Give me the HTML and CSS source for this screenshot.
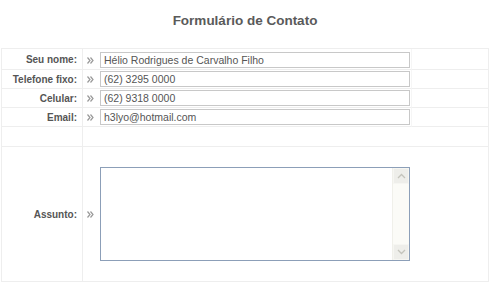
FILE: index.html
```html
<!DOCTYPE html>
<html lang="pt-BR">
<head>
    <meta charset="UTF-8">
    <meta name="viewport" content="width=device-width, initial-scale=1.0">
    <title>Formulário de Contato</title>
    <link rel="stylesheet" href="styles.css">
</head>
<body>
    <div class="container">
        <h1>Formulário de Contato</h1>
        <form id="contact-form">
            <table class="form-table">
                <colgroup>
                    <col class="col-label">
                    <col class="col-field">
                    <col class="col-spacer">
                </colgroup>
                <tr class="row-first">
                    <td class="label">Seu nome:</td>
                    <td class="field">
                        <div class="field-inner">
                            <svg class="arrow" width="7" height="7" viewBox="0 0 7 7"><path d="M0.5 0.5 L3 3.5 L0.5 6.5 M3.5 0.5 L6 3.5 L3.5 6.5" fill="none" stroke="#999" stroke-width="1.2"/></svg>
                            <input type="text" name="nome" value="Hélio Rodrigues de Carvalho Filho">
                        </div>
                    </td>
                    <td class="spacer"></td>
                </tr>
                <tr>
                    <td class="label">Telefone fixo:</td>
                    <td class="field">
                        <div class="field-inner">
                            <svg class="arrow" width="7" height="7" viewBox="0 0 7 7"><path d="M0.5 0.5 L3 3.5 L0.5 6.5 M3.5 0.5 L6 3.5 L3.5 6.5" fill="none" stroke="#999" stroke-width="1.2"/></svg>
                            <input type="text" name="telefone" value="(62) 3295 0000">
                        </div>
                    </td>
                    <td class="spacer"></td>
                </tr>
                <tr>
                    <td class="label">Celular:</td>
                    <td class="field">
                        <div class="field-inner">
                            <svg class="arrow" width="7" height="7" viewBox="0 0 7 7"><path d="M0.5 0.5 L3 3.5 L0.5 6.5 M3.5 0.5 L6 3.5 L3.5 6.5" fill="none" stroke="#999" stroke-width="1.2"/></svg>
                            <input type="text" name="celular" value="(62) 9318 0000">
                        </div>
                    </td>
                    <td class="spacer"></td>
                </tr>
                <tr>
                    <td class="label">Email:</td>
                    <td class="field">
                        <div class="field-inner">
                            <svg class="arrow" width="7" height="7" viewBox="0 0 7 7"><path d="M0.5 0.5 L3 3.5 L0.5 6.5 M3.5 0.5 L6 3.5 L3.5 6.5" fill="none" stroke="#999" stroke-width="1.2"/></svg>
                            <input type="text" name="email" value="h3lyo@hotmail.com">
                        </div>
                    </td>
                    <td class="spacer"></td>
                </tr>
                <tr class="row-empty">
                    <td class="label"></td>
                    <td class="field" colspan="2"><div class="field-inner"></div></td>
                </tr>
                <tr class="row-message">
                    <td class="label">Assunto:</td>
                    <td class="field" colspan="2">
                        <div class="field-inner">
                            <svg class="arrow" width="7" height="7" viewBox="0 0 7 7"><path d="M0.5 0.5 L3 3.5 L0.5 6.5 M3.5 0.5 L6 3.5 L3.5 6.5" fill="none" stroke="#999" stroke-width="1.2"/></svg>
                            <div class="textbox">
                                <textarea name="assunto"></textarea>
                                <div class="scrollbar">
                                    <div class="scroll-btn">
                                        <svg width="9" height="6" viewBox="0 0 9 6"><path d="M1 5 L4.5 1.5 L8 5" fill="none" stroke="#c4c4bc" stroke-width="1.3"/></svg>
                                    </div>
                                    <div class="scroll-track"></div>
                                    <div class="scroll-btn">
                                        <svg width="9" height="6" viewBox="0 0 9 6"><path d="M1 1 L4.5 4.5 L8 1" fill="none" stroke="#c4c4bc" stroke-width="1.3"/></svg>
                                    </div>
                                </div>
                            </div>
                        </div>
                    </td>
                </tr>
            </table>
        </form>
    </div>
</body>
</html>
```

FILE: styles.css
```css
body {
    margin: 0;
    font-family: "Liberation Sans", Arial, sans-serif;
    background: #fff;
}
.container {
    width: 488px;
    margin-left: 1px;
}
h1 {
    margin: 0;
    padding-top: 13px;
    height: 48px;
    box-sizing: border-box;
    font-size: 13.5px;
    line-height: 16px;
    text-align: center;
    color: #5a5a5a;
}
form {
    margin: 0;
}
.form-table {
    width: 488px;
    table-layout: fixed;
    border-collapse: separate;
    border-spacing: 0;
    border: 1px solid #eeeeee;
}
.col-label {
    width: 81px;
}
.col-field {
    width: 328px;
}
.col-spacer {
    width: 77px;
}
.form-table td {
    border-bottom: 1px solid #eeeeee;
    padding: 0;
}
.form-table tr:last-child td {
    border-bottom: none;
}
.form-table .label {
    padding-right: 5px;
    border-right: 1px solid #eeeeee;
    text-align: right;
    font-size: 10px;
    font-weight: bold;
    color: #555;
    white-space: nowrap;
}
.form-table .field {
    padding-left: 4px;
    white-space: nowrap;
}
.form-table .spacer {
    border-left: 1px solid #f6f6f6;
}
.field-inner {
    display: flex;
    align-items: center;
    gap: 6px;
    height: 18px;
}
.row-first .field-inner {
    padding-top: 2px;
}
.row-empty .field-inner {
    height: 19px;
}
.row-message .field-inner {
    height: 134px;
}
.arrow {
    flex: none;
}
input[type="text"] {
    width: 310px;
    height: 16px;
    margin: 0;
    box-sizing: border-box;
    border: 1px solid #c8c8c8;
    padding: 0 3px;
    font-family: "Liberation Sans", Arial, sans-serif;
    font-size: 10.5px;
    color: #555;
    outline: none;
}
.textbox {
    display: flex;
    width: 310px;
    height: 94px;
    box-sizing: border-box;
    border: 1px solid #8c9fb8;
    background: #fff;
}
.textbox textarea {
    flex: 1;
    margin: 0;
    border: none;
    resize: none;
    outline: none;
    padding: 2px;
    font-family: "Liberation Sans", Arial, sans-serif;
    font-size: 10.5px;
}
.scrollbar {
    width: 16px;
    display: flex;
    flex-direction: column;
    background: #fbfbf7;
    border-left: 1px solid #f0f0ea;
}
.scroll-btn {
    height: 16px;
    display: flex;
    align-items: center;
    justify-content: center;
    background: #eeeeea;
    border: 1px solid #f6f6f2;
    box-sizing: border-box;
}
.scroll-track {
    flex: 1;
}
```
